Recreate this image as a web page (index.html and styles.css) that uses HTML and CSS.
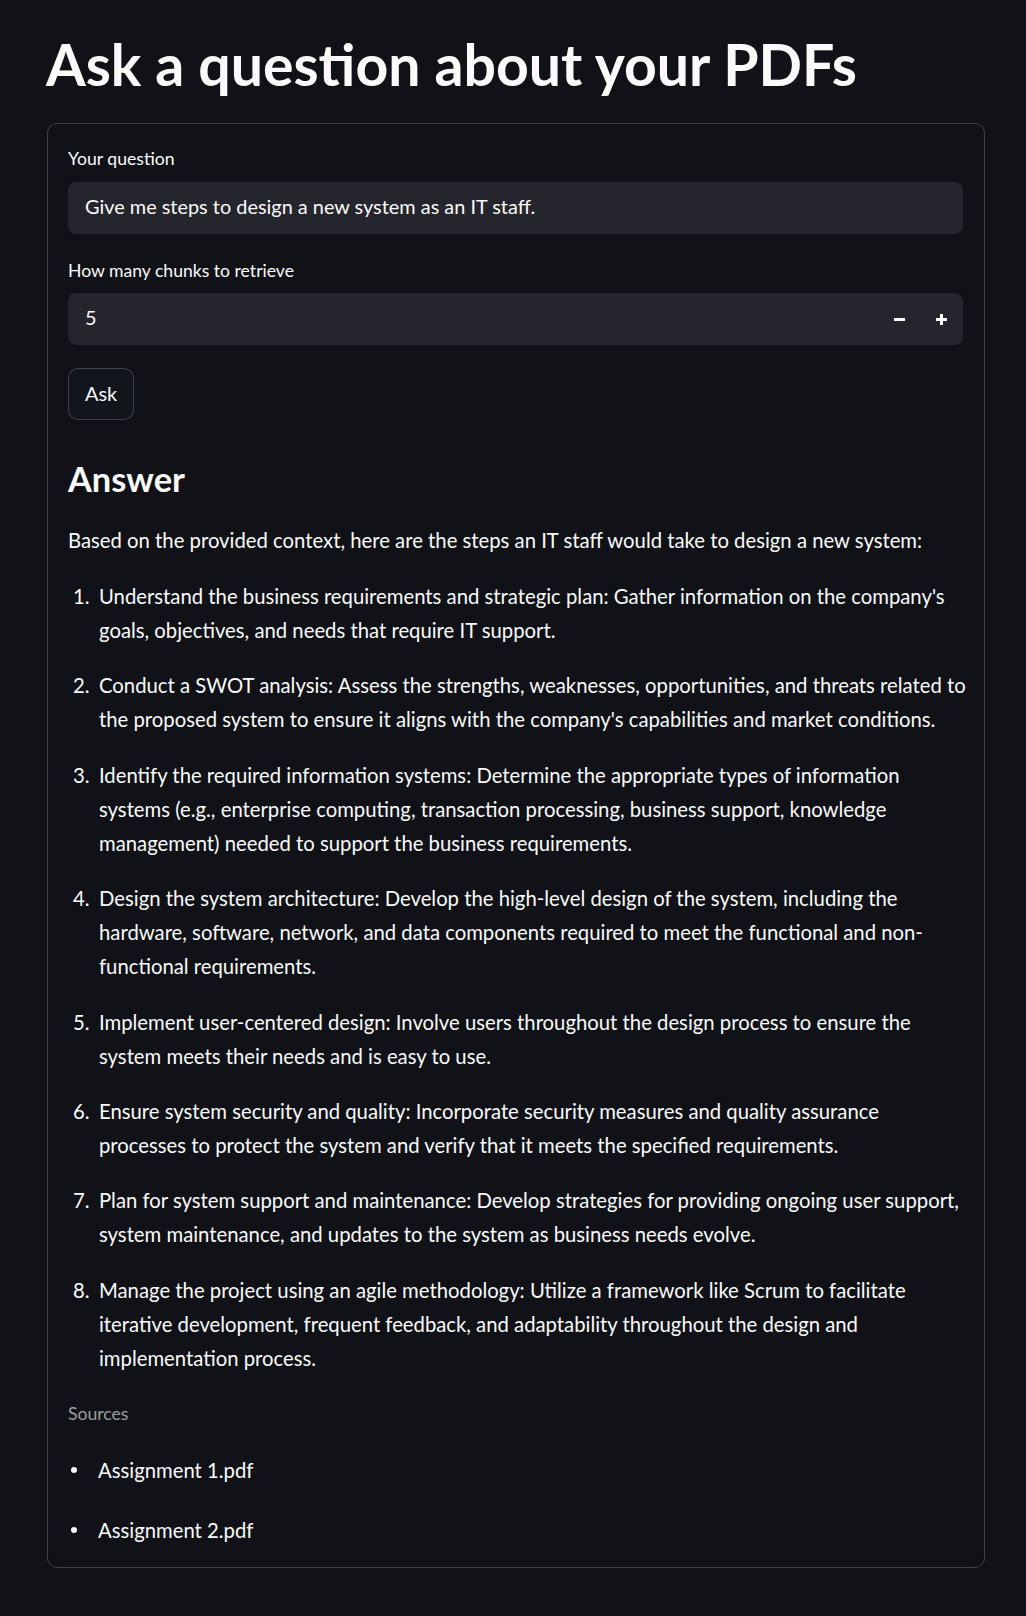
FILE: index.html
```html
<!DOCTYPE html>
<html lang="en">
<head>
<meta charset="utf-8">
<title>Ask a question about your PDFs</title>
<link rel="stylesheet" href="styles.css">
</head>
<body>
<main class="page">
  <h1 class="title">Ask a question about your PDFs</h1>
  <section class="card">
    <div class="field">
      <label class="field-label">Your question</label>
      <div class="text-input">Give me steps to design a new system as an IT staff.</div>
    </div>
    <div class="field field-second">
      <label class="field-label">How many chunks to retrieve</label>
      <div class="number-input">
        <span class="number-value">5</span>
        <span class="step-btn" aria-label="decrement">
          <svg width="11" height="3" viewBox="0 0 11 3"><rect x="0" y="0" width="11" height="3" fill="#fafafa"/></svg>
        </span>
        <span class="step-btn" aria-label="increment">
          <svg width="11" height="11" viewBox="0 0 11 11"><rect x="0" y="4" width="11" height="3" fill="#fafafa"/><rect x="4" y="0" width="3" height="11" fill="#fafafa"/></svg>
        </span>
      </div>
    </div>
    <button class="ask-btn">Ask</button>

    <h3 class="answer-title">Answer</h3>
    <p class="answer-intro">Based on the provided context, here are the steps an IT staff would take to design a new system:</p>
    <ol class="steps">
      <li>Understand the business requirements and strategic plan: Gather information on the company's<br>goals, objectives, and needs that require IT support.</li>
      <li>Conduct a SWOT analysis: Assess the strengths, weaknesses, opportunities, and threats related to<br>the proposed system to ensure it aligns with the company's capabilities and market conditions.</li>
      <li>Identify the required information systems: Determine the appropriate types of information<br>systems (e.g., enterprise computing, transaction processing, business support, knowledge<br>management) needed to support the business requirements.</li>
      <li>Design the system architecture: Develop the high-level design of the system, including the<br>hardware, software, network, and data components required to meet the functional and non-<br>functional requirements.</li>
      <li>Implement user-centered design: Involve users throughout the design process to ensure the<br>system meets their needs and is easy to use.</li>
      <li>Ensure system security and quality: Incorporate security measures and quality assurance<br>processes to protect the system and verify that it meets the specified requirements.</li>
      <li>Plan for system support and maintenance: Develop strategies for providing ongoing user support,<br>system maintenance, and updates to the system as business needs evolve.</li>
      <li>Manage the project using an agile methodology: Utilize a framework like Scrum to facilitate<br>iterative development, frequent feedback, and adaptability throughout the design and<br>implementation process.</li>
    </ol>
    <p class="caption">Sources</p>
    <ul class="sources">
      <li>Assignment 1.pdf</li>
      <li>Assignment 2.pdf</li>
    </ul>
  </section>
</main>
</body>
</html>
```
FILE: styles.css
```css
html, body {
  margin: 0;
  padding: 0;
  background: #101218;
}
body {
  color: #fafafa;
  font-family: "Lato", "Source Sans Pro", "Liberation Sans", sans-serif;
  font-size: 20.3px;
}
.page {
  padding: 30px 41px 48px 46px;
}
.title {
  margin: 0;
  font-size: 57.2px;
  line-height: 68px;
  font-weight: 700;
}
.card {
  margin: 25px 0 0 1px;
  border: 1px solid rgba(250, 250, 250, 0.2);
  border-radius: 10px;
  padding: 21px 21px 20px 20px;
  display: flex;
  flex-direction: column;
  align-items: stretch;
}
.field {
  display: flex;
  flex-direction: column;
}
.field-second {
  margin-top: 23px;
}
.field-label {
  font-size: 17.6px;
  line-height: 28px;
  height: 28px;
  margin-bottom: 8.7px;
}
.text-input,
.number-input {
  height: 52px;
  box-sizing: border-box;
  background: #24252d;
  border-radius: 8px;
  font-size: 19.9px;
  display: flex;
  align-items: center;
  padding: 0 0 4px 17px;
}
.number-input {
  padding-right: 0;
}
.number-value {
  flex: 1;
}
.step-btn {
  width: 42px;
  height: 52px;
  display: flex;
  align-items: center;
  justify-content: center;
  margin-top: 4px;
}
.step-btn:last-child {
  width: 43px;
}
.ask-btn {
  align-self: flex-start;
  margin-top: 23px;
  height: 52px;
  box-sizing: border-box;
  padding: 0 16px 2px 16px;
  background: #13151c;
  color: #fafafa;
  border: 1px solid rgba(250, 250, 250, 0.2);
  border-radius: 10px;
  font-family: inherit;
  font-size: 19.9px;
}
.answer-title {
  margin: 37.8px 0 0 0;
  font-size: 34.4px;
  line-height: 41.3px;
  font-weight: 700;
}
.answer-intro {
  margin: 23.8px 0 0 0;
  line-height: 34px;
}
.steps {
  margin: 21.7px -30px 0 0;
  padding: 0 0 0 31px;
  list-style: none;
  counter-reset: step;
  line-height: 34px;
  white-space: nowrap;
}
.steps li {
  counter-increment: step;
  padding-left: 0;
  margin-bottom: 21.4px;
}
.steps li:last-child {
  margin-bottom: 0;
}
.steps li::before {
  content: counter(step) ".";
  display: inline-block;
  width: 26px;
  margin-left: -26px;
}
.caption {
  margin: 24.9px 0 0 0;
  font-size: 17.6px;
  line-height: 28px;
  color: rgba(250, 250, 250, 0.6);
}
.sources {
  margin: 25.4px 0 0 0;
  padding: 0 0 0 30px;
  list-style: none;
  line-height: 34px;
}
.sources li {
  margin-bottom: 26px;
}
.sources li:last-child {
  margin-bottom: 0;
}
.sources li::before {
  content: "";
  display: inline-block;
  width: 6px;
  height: 6px;
  border-radius: 50%;
  background: #fafafa;
  margin-left: -27px;
  margin-right: 21px;
  vertical-align: 5px;
}
```
